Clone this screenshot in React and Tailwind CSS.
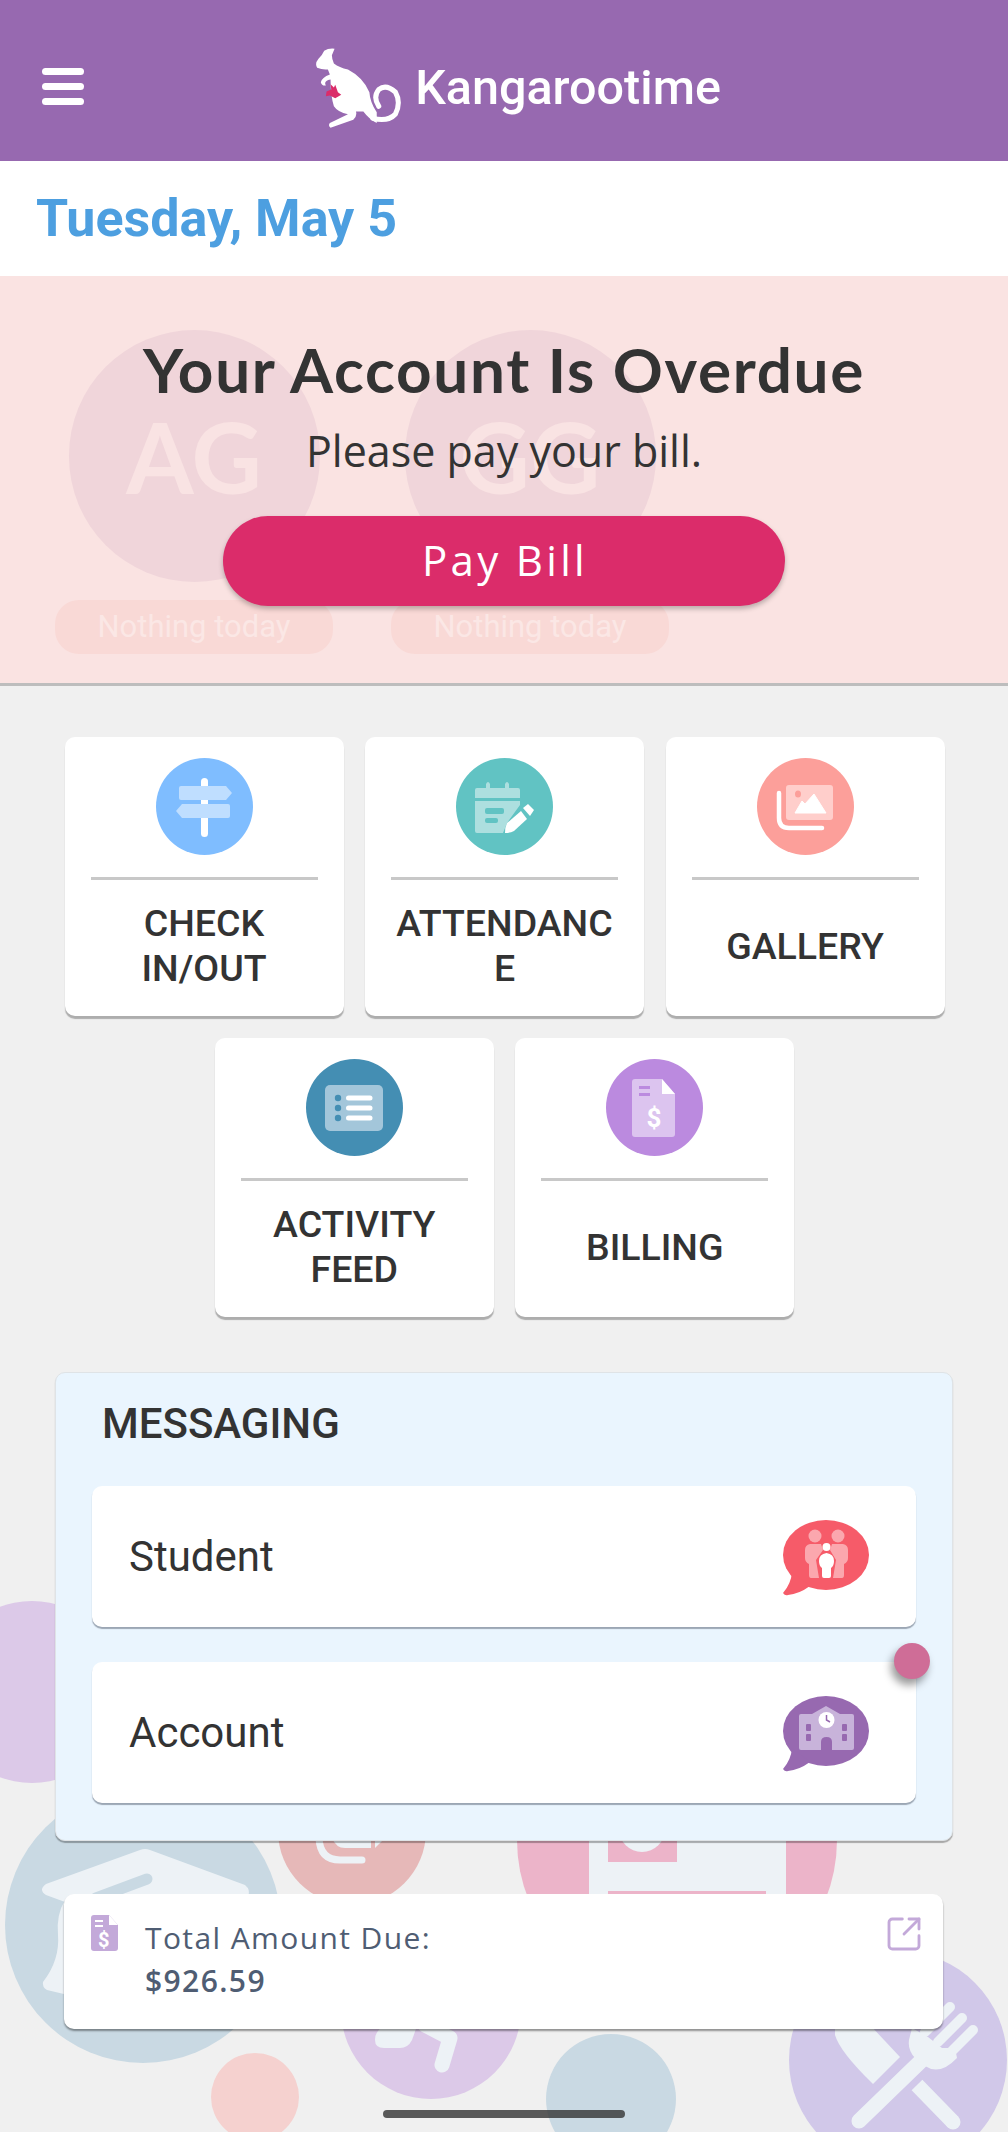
import { SquareArrowOutUpRight } from 'lucide-react';

const roboto = "font-['Roboto',sans-serif]";
const openSans = "font-['Open_Sans',sans-serif]";

function Backdrop() {
  const light = '#edf2f6';
  return (
    <svg className="absolute left-0 top-0" width="1008" height="2132" viewBox="0 0 1008 2132">
      <circle cx="32" cy="1692" r="91" fill="#dcc9e8" />

      {/* graduation cap */}
      <circle cx="143" cy="1925" r="138" fill="#c9d9e3" />
      <path d="M140 1850 Q145 1848 150 1850 L245 1885 Q251 1890 248 1896 L248 1902 L65 1902 L46 1895 Q38 1890 46 1884 Z" fill={light} />
      <path d="M65 1900 Q56 1915 58 1935 Q60 1960 43 1982 Q42 1987 47 1990 L68 1995 Z" fill={light} />
      <path d="M147 1879 L96 1898" stroke="#c9d9e3" strokeWidth="11" strokeLinecap="round" />

      {/* photos */}
      <circle cx="352" cy="1831" r="74" fill="#e6b8b8" />
      <path d="M319 1838 Q320 1860 340 1860 L362 1860" fill="none" stroke={light} strokeWidth="7" strokeLinecap="round" />
      <path d="M332 1838 Q336 1848 345 1848 L371 1848 L371 1838 Z" fill={light} />
      <path d="M375 1838 L385 1838 L375 1848 Z" fill={light} />

      {/* clipboard */}
      <circle cx="677" cy="1840" r="160" fill="#ecb4c9" />
      <rect x="589" y="1820" width="197" height="90" fill={light} />
      <rect x="608" y="1820" width="69" height="42" fill="#ecb4c9" />
      <circle cx="642" cy="1829" r="23" fill={light} />
      <rect x="608" y="1891" width="158" height="10" fill="#ecb4c9" />

      {/* whistle */}
      <circle cx="431" cy="2009" r="90" fill="#dcc9e8" />
      <path d="M385 2026 L417 2026 L412 2040 Q408 2048 400 2048 L384 2048 Q375 2048 375 2040 Q375 2030 385 2026 Z" fill={light} />
      <path d="M425 2025 L450 2038 L442 2065" fill="none" stroke={light} strokeWidth="15" strokeLinecap="round" strokeLinejoin="round" />

      <circle cx="255" cy="2097" r="44" fill="#f5d1cf" />
      <circle cx="611" cy="2099" r="65" fill="#c9d9e3" />

      {/* fork and knife */}
      <circle cx="898" cy="2060" r="109" fill="#d1c8e9" />
      <path d="M835 2025 L870 2025 L900 2057 L873 2084 Q840 2052 835 2035 Z" fill={light} />
      <path d="M917 2085 L953 2122" stroke={light} strokeWidth="15" />
      <circle cx="953" cy="2122" r="7.5" fill={light} />
      <path d="M859 2121 L922 2060" stroke={light} strokeWidth="15" strokeLinecap="round" />
      <path d="M950 2007 L925 2032 M962 2018 L938 2042 M973 2030 L950 2053" stroke={light} strokeWidth="10" strokeLinecap="round" />
      <path d="M912 2028 L928 2037 L942 2048 L955 2048 L957 2058 Q940 2076 925 2066 L915 2058 Q906 2048 910 2036 Z" fill={light} />
    </svg>
  );
}

function Logo() {
  return (
    <svg width="88" height="81" viewBox="78 58 262 242" className="shrink-0">
      <path
        d="M136 60 Q118 58 105 66 Q100 78 88 90 Q76 104 84 117 Q100 124 116 122 L122 137 Q98 146 95 160 Q98 172 110 170 Q102 156 124 152 Q124 200 134 232 Q146 250 176 256 L122 282 Q116 290 124 296 L192 272 Q204 262 200 248 L222 248 Q240 272 262 282 L262 250 Q242 220 240 190 Q222 146 176 122 Q150 116 134 104 Q128 92 128 80 Z"
        fill="#fff"
      />
      <path d="M268 232 Q250 205 268 182 Q290 165 318 190 Q335 220 318 255 Q295 280 250 268" fill="none" stroke="#fff" strokeWidth="15" strokeLinecap="round" />
      <path d="M124 166 L134 176 L138 168 L146 190 L156 198 L138 208 L122 200 L110 202 L112 188 L126 182 Z" fill="#db2c6a" />
    </svg>
  );
}

function Signpost() {
  return (
    <>
      <rect x="45" y="20" width="7" height="59" rx="3.5" fill="#fff" />
      <path d="M25 28 L70 28 L76 35 L70 42 L25 42 Q23 42 23 40 L23 30 Q23 28 25 28 Z" fill="#bfdeff" />
      <path d="M26 46 L72 46 Q74 46 74 48 L74 58 Q74 60 72 60 L26 60 L20 53 Z" fill="#bfdeff" />
    </>
  );
}

function NoteCalendar() {
  return (
    <>
      <path d="M21 30 L30 30 L30 26 Q32 22 34 26 L34 30 L49 30 L49 26 Q51 22 53 26 L53 30 L62 30 Q64 30 64 32 L64 40 L19 40 L19 32 Q19 30 21 30 Z" fill="#addfdf" />
      <path d="M19 43 L64 43 L64 47 L51 65 L47 75 L21 75 Q19 75 19 73 Z" fill="#addfdf" />
      <rect x="29" y="50" width="19" height="6" rx="2" fill="#61c3c3" />
      <rect x="29" y="60" width="13" height="5" rx="2" fill="#61c3c3" />
      <path d="M65 53 L71 61 L58 73 Q54 75 49 75 Q49 69 51 65 Z" fill="#fff" />
      <path d="M72 46 L78 52 L74 58 L67 50 Z" fill="#fff" />
    </>
  );
}

function Photos() {
  return (
    <>
      <rect x="29" y="27" width="47" height="35" rx="3" fill="#ffcecb" />
      <path d="M38 55 L45 43 L48 46 L57 36 L69 55 Z" fill="#fff" stroke="#fff" strokeWidth="1" strokeLinejoin="round" />
      <ellipse cx="41" cy="36" rx="3" ry="3.5" fill="#fc9f9a" />
      <path d="M22 35 L22 60 Q22 70 32 70 L65 70" fill="none" stroke="#fff" strokeWidth="4.5" strokeLinecap="round" />
    </>
  );
}

function FeedList() {
  return (
    <>
      <rect x="19" y="26" width="58" height="46" rx="5" fill="#a3c6da" />
      {[39, 49, 59].map((y) => (
        <g key={y}>
          <circle cx="32" cy={y} r="3.2" fill="#448eb3" />
          <rect x="40" y={y - 2.5} width="26.5" height="5" rx="2.5" fill="#fff" />
        </g>
      ))}
    </>
  );
}

function BillDoc() {
  return (
    <>
      <path d="M29 20 L56 20 L69 35 L69 75 Q69 78 66 78 L29 78 Q26 78 26 75 L26 23 Q26 20 29 20 Z" fill="#dcc4ef" />
      <path d="M56 20 L69 35 L56 35 Z" fill="#fff" />
      <rect x="33" y="27" width="11" height="3" fill="#bb8adf" />
      <rect x="33" y="34" width="11" height="3" fill="#bb8adf" />
      <text x="48" y="68" textAnchor="middle" fontFamily="Roboto" fontWeight="700" fontSize="26" fill="#fff">$</text>
    </>
  );
}

function Tile({ color, icon, label }) {
  return (
    <div className="flex h-[279px] w-[279px] flex-col items-center rounded-[10px] bg-white px-[26px] pt-[21px] shadow-[0_3px_1px_rgba(0,0,0,0.28)]">
      <svg width="97" height="97" viewBox="0 0 97 97" className="shrink-0">
        <circle cx="48.5" cy="48.5" r="48.5" fill={color} />
        {icon}
      </svg>
      <div className="mt-[22px] h-[3px] w-full shrink-0 bg-[#c8c8c8]" />
      <div className={`${roboto} flex w-full flex-1 items-center justify-center pb-[4px] text-center text-[37.5px] leading-[45px] font-medium [overflow-wrap:anywhere] text-[#333]`}>
        {label}
      </div>
    </div>
  );
}

function Bubble({ color, children }) {
  return (
    <svg width="86" height="76" viewBox="0 0 86 76">
      <ellipse cx="43" cy="35" rx="43" ry="35" fill={color} />
      <path d="M9 52 Q8 64 0 73 Q2 76 5 75 Q16 74 27 66 Z" fill={color} />
      {children}
    </svg>
  );
}

function Family() {
  return (
    <>
      <circle cx="32" cy="16" r="6.5" fill="#fba7ae" />
      <circle cx="55" cy="16" r="6.5" fill="#fba7ae" />
      <path d="M27 24 L38 24 L40 30 L33 40 L36 58 L28 58 Q26 58 26 55 L26 44 Q22 42 22 38 L22 30 Q22 25 27 24 Z" fill="#fba7ae" />
      <path d="M60 24 L49 24 L47 30 L53 40 L50 58 L59 58 Q61 58 61 55 L61 44 Q65 42 65 38 L65 30 Q65 25 60 24 Z" fill="#fba7ae" />
      <circle cx="43.5" cy="27" r="4" fill="#fff" />
      <path d="M43.5 33 Q51 34 51 41 Q51 46 48 48 L48 56 Q48 58 46 58 L41 58 Q39 58 39 56 L39 48 Q36 46 36 41 Q36 34 43.5 33 Z" fill="#fff" />
    </>
  );
}

function School() {
  return (
    <>
      <path d="M18 18 L29 18 L43 10 L57 18 L69 18 Q71 18 71 20 L71 52 Q71 54 69 54 L18 54 Q16 54 16 52 L16 20 Q16 18 18 18 Z" fill="#c8b3da" />
      <circle cx="43.5" cy="24" r="8" fill="#fff" />
      <path d="M43.5 19 L43.5 24 L47 26" fill="none" stroke="#9769b0" strokeWidth="1.5" />
      <rect x="23" y="28" width="5" height="7" rx="1" fill="#9769b0" />
      <rect x="23" y="38" width="5" height="7" rx="1" fill="#9769b0" />
      <rect x="59" y="28" width="5" height="7" rx="1" fill="#9769b0" />
      <rect x="59" y="38" width="5" height="7" rx="1" fill="#9769b0" />
      <path d="M38 54 L38 46 Q38 41 43.5 41 Q49 41 49 46 L49 54 Z" fill="#9769b0" />
    </>
  );
}

function MessageRow({ label, children, dot }) {
  return (
    <div className="relative flex h-[141px] items-center justify-between rounded-[10px] bg-white pr-[47px] pl-[37px] shadow-[0_2px_1px_rgba(60,70,90,0.45)]">
      <span className={`${roboto} text-[42px] leading-none text-[#333]`}>{label}</span>
      <span className="mt-[2px]">{children}</span>
      {dot && (
        <span className="absolute top-[-19px] right-[-14px] h-[36px] w-[36px] rounded-full bg-[#cf6d97] shadow-[-3px_6px_8px_rgba(0,0,0,0.4)]" />
      )}
    </div>
  );
}

function Ghost({ initials }) {
  return (
    <div className="flex w-[278px] flex-col items-center">
      <div className="flex h-[252px] w-[251px] items-center justify-center rounded-full bg-[#f0d5da]">
        <span className="font-['Lato',sans-serif] text-[97px] leading-none font-bold text-[#f9e3e3]">{initials}</span>
      </div>
      <div className={`${roboto} mt-[18px] flex h-[54px] w-full items-center justify-center rounded-[24px] bg-[#f9d9d6] text-[31px] text-[#fbe7e5]`}>
        Nothing today
      </div>
    </div>
  );
}

export default function App() {
  return (
    <div className="relative h-[2132px] w-[1008px] overflow-hidden bg-[#f0f0f0]">
      <Backdrop />

      <div className="relative">
        <header className="relative flex h-[161px] items-center justify-center bg-[#9769b0] pt-[15px]">
          <div className="absolute top-[68px] left-[42px] flex w-[42px] flex-col gap-[8px]">
            <span className="h-[7px] rounded-full bg-white" />
            <span className="h-[7px] rounded-full bg-white" />
            <span className="h-[7px] rounded-full bg-white" />
          </div>
          <div className="flex items-center gap-[12px] pl-[28px]">
            <Logo />
            <span className={`${roboto} text-[48.5px] leading-none font-medium text-white`}>Kangarootime</span>
          </div>
        </header>

        <div className={`${roboto} flex h-[115px] items-center bg-white pl-[36px] text-[52px] font-bold text-[#4d9fe0]`}>
          Tuesday, May 5
        </div>

        <section className="relative flex h-[410px] flex-col items-center border-b-[3px] border-[#bdbdbd] bg-[#fae3e2]">
          <div className="absolute top-[54px] left-[55px] flex gap-[58px]">
            <Ghost initials="AG" />
            <Ghost initials="GG" />
          </div>
          <h1 className="relative mt-[57px] font-['Lato',sans-serif] text-[62px] leading-[72px] font-bold tracking-[1.7px] text-[#333]">
            Your Account Is Overdue
          </h1>
          <p className={`${openSans} relative mt-[19px] text-[43px] leading-[54px] text-[#333]`}>Please pay your bill.</p>
          <button className={`${openSans} relative mt-[38px] h-[90px] w-[562px] rounded-full bg-[#db2c6a] pb-[4px] pl-[2px] text-[42px] font-medium tracking-[3.3px] text-white shadow-[0_3px_5px_rgba(0,0,0,0.25)]`}>
            Pay Bill
          </button>
        </section>

        <div className="mt-[51px] ml-[64px] flex w-[881px] flex-wrap justify-center gap-x-[21.5px] gap-y-[22px]">
          <Tile color="#7fbdff" icon={<Signpost />} label="CHECK IN/OUT" />
          <Tile color="#61c3c3" icon={<NoteCalendar />} label="ATTENDANCE" />
          <Tile color="#fc9f9a" icon={<Photos />} label="GALLERY" />
          <Tile color="#448eb3" icon={<FeedList />} label="ACTIVITY FEED" />
          <Tile color="#bb8adf" icon={<BillDoc />} label="BILLING" />
        </div>

        <section className="mt-[55px] ml-[55px] h-[469px] w-[898px] rounded-[10px] border border-[#dfe3e6] bg-[#eaf5fe] px-[36px] pt-[28px] shadow-[0_2px_1px_rgba(0,0,0,0.3)]">
          <h2 className={`${roboto} pl-[10px] text-[42px] leading-[46px] font-medium text-[#333]`}>MESSAGING</h2>
          <div className="mt-[39px] flex flex-col gap-[35px]">
            <MessageRow label="Student">
              <Bubble color="#f65b69"><Family /></Bubble>
            </MessageRow>
            <MessageRow label="Account" dot>
              <Bubble color="#9769b0"><School /></Bubble>
            </MessageRow>
          </div>
        </section>

        <div className={`${openSans} relative mt-[53px] ml-[64px] flex h-[135px] w-[879px] rounded-[10px] bg-white pt-[21px] pl-[27px] tracking-[1.4px] text-[#4f5d73] shadow-[0_2px_2px_rgba(0,0,0,0.4)]`}>
          <svg width="27" height="36" viewBox="0 0 27 36" className="shrink-0">
            <path d="M3 0 L18 0 L27 10 L27 33 Q27 36 24 36 L3 36 Q0 36 0 33 L0 3 Q0 0 3 0 Z" fill="#c3a9d9" />
            <path d="M18 0 L27 10 L18 10 Z" fill="#fff" />
            <rect x="4" y="5" width="8" height="2" fill="#fff" />
            <rect x="4" y="10" width="8" height="2" fill="#fff" />
            <text x="13.5" y="32" textAnchor="middle" fontFamily="Roboto" fontWeight="700" fontSize="20" fill="#fff">$</text>
          </svg>
          <div className="mt-[1px] ml-[27px]">
            <div className="text-[30px] leading-[43px]">Total Amount Due:</div>
            <div className="text-[30px] leading-[43px] font-semibold">$926.59</div>
          </div>
          <SquareArrowOutUpRight className="absolute top-[20px] right-[19px] text-[#c3a9d9]" size={40} strokeWidth={1.7} />
        </div>
      </div>

      <div className="absolute top-[2110px] left-[383px] h-[8px] w-[242px] rounded-full bg-[#333]/80" />
    </div>
  );
}
